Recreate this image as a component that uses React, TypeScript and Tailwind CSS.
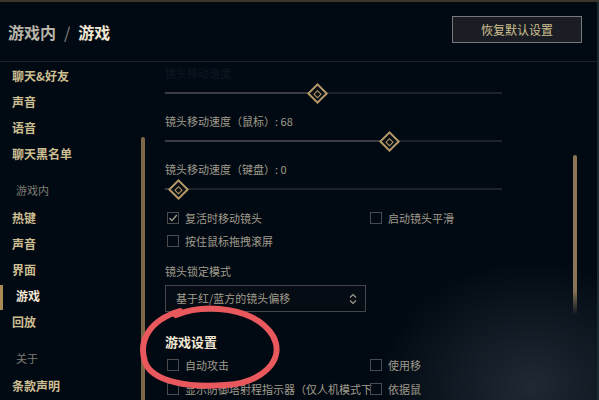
import React from 'react';

const font = { fontFamily: '"Noto Sans CJK SC", "Noto Sans", sans-serif' };

const Slider = ({ value }: { value: number }) => {
    // thumb center runs from 13px to 324px across the 337px track
    const left = 13 + (value / 100) * 311;
    return (
        <div className="h-[20px] flex items-center">
            <div className="relative w-[337px] h-[2px] bg-[#1e2328]">
                <div className="absolute left-0 top-0 h-[2px] bg-[#3c3c41]" style={{ width: left }} />
                <div
                    className="absolute top-[1px] w-[22px] h-[22px] -translate-x-1/2 -translate-y-1/2 flex items-center justify-center"
                    style={{ left }}
                >
                    <div className="w-[15px] h-[15px] rotate-45 border-2 border-[#b4996a] bg-[#0a0f14] flex items-center justify-center">
                        <div className="w-[6px] h-[6px] border-[1.5px] border-[#b4996a]" />
                    </div>
                </div>
            </div>
        </div>
    );
};

const Check = ({ label, checked = false }: { label: string; checked?: boolean }) => (
    <div className="flex items-center gap-[6px]">
        <div className="w-[12px] h-[12px] border border-[#4b4b4e] flex items-center justify-center shrink-0">
            {checked && (
                <svg width="10" height="10" viewBox="0 0 10 10">
                    <path d="M1.5 5.2 L4 7.6 L8.8 2" stroke="#a09b8c" strokeWidth="1.4" fill="none" />
                </svg>
            )}
        </div>
        <span className="text-[11px] text-[#a09b8c] whitespace-nowrap">{label}</span>
    </div>
);

const SideItem = ({ label, active = false }: { label: string; active?: boolean }) => (
    <div className="relative h-[26px] flex items-center">
        {active && <div className="absolute left-0 top-[2px] w-[3px] h-[25px] bg-[#a88a55]" />}
        <span
            className={
                active
                    ? 'pl-[16px] text-[12px] font-bold text-[#f0e6d2]'
                    : 'pl-[12px] text-[12px] font-bold text-[#cdbe91]'
            }
        >
            {label}
        </span>
    </div>
);

const SideHeader = ({ label }: { label: string }) => (
    <div className="h-[26px] mt-[10px] flex items-center pl-[16px] text-[11px] text-[#7e7c74]">{label}</div>
);

export default function App() {
    return (
        <div className="relative w-[599px] h-[400px] overflow-hidden bg-[#010a13] border-t-2 border-[#3a362c]" style={font}>
            <div className="flex flex-col h-full border-r-2 border-[#1a2a2e]">
                {/* Header */}
                <header className="h-[60px] flex items-center justify-between pl-[8px] pr-[15px] border-b border-[#1e2328] shrink-0">
                    <div className="text-[16px] font-bold flex items-center gap-[8px]">
                        <span className="text-[#b8b4a8]">游戏内</span>
                        <span className="text-[#8a877e] font-normal">/</span>
                        <span className="text-[#f0e6d2]">游戏</span>
                    </div>
                    <button className="w-[130px] h-[27px] mb-[4px] border border-[#78787a] bg-[#1a1e24] text-[12px] text-[#cdbe91]">
                        恢复默认设置
                    </button>
                </header>

                <div className="flex flex-1 min-h-0">
                    {/* Sidebar */}
                    <aside className="relative w-[146px] shrink-0 pt-[1px]">
                        <SideItem label="聊天&好友" />
                        <SideItem label="声音" />
                        <SideItem label="语音" />
                        <SideItem label="聊天黑名单" />
                        <SideHeader label="游戏内" />
                        <div className="mt-[2px]">
                            <SideItem label="热键" />
                            <SideItem label="声音" />
                            <SideItem label="界面" />
                            <SideItem label="游戏" active />
                            <SideItem label="回放" />
                        </div>
                        <SideHeader label="关于" />
                        <div className="mt-[2px]">
                            <SideItem label="条款声明" />
                        </div>
                        <div className="absolute right-[1px] top-[75px] bottom-0 w-[4px] rounded-t-sm bg-[#7e6848]" />
                    </aside>

                    {/* Content */}
                    <main className="relative flex-1 pl-[19px] pt-[1px]">
                        <div className="h-[20px] flex items-center text-[11px] text-[#0e1822]">镜头移动速度</div>
                        <Slider value={45} />
                        <div className="h-[20px] mt-[8px] flex items-center text-[11px] text-[#a09b8c]">镜头移动速度（鼠标）: 68</div>
                        <Slider value={68} />
                        <div className="h-[20px] mt-[8px] flex items-center text-[11px] text-[#a09b8c]">镜头移动速度（键盘）: 0</div>
                        <Slider value={0} />

                        <div className="h-[22px] mt-[8px] pl-[2px] grid grid-cols-[203px_1fr] items-center">
                            <Check label="复活时移动镜头" checked />
                            <Check label="启动镜头平滑" />
                        </div>
                        <div className="h-[22px] mt-[1px] pl-[2px] flex items-center">
                            <Check label="按住鼠标拖拽滚屏" />
                        </div>

                        <div className="h-[20px] mt-[9px] flex items-center text-[11px] text-[#a09b8c]">镜头锁定模式</div>
                        <div className="mt-[4px] w-[201px] h-[27px] border border-[#46464a] bg-[#050c14] flex items-center justify-between pl-[10px] pr-[8px]">
                            <span className="text-[11px] text-[#a09b8c]">基于红/蓝方的镜头偏移</span>
                            <svg width="8" height="12" viewBox="0 0 8 12">
                                <path d="M1 4.5 L4 1.5 L7 4.5 M1 7.5 L4 10.5 L7 7.5" stroke="#a09b8c" strokeWidth="1.2" fill="none" />
                            </svg>
                        </div>

                        <div className="h-[20px] mt-[20px] flex items-center text-[13px] font-bold text-[#f0e6d2]">游戏设置</div>
                        <div className="h-[22px] mt-[2px] pl-[2px] grid grid-cols-[203px_1fr] items-center">
                            <Check label="自动攻击" />
                            <Check label="使用移" />
                        </div>
                        <div className="h-[22px] mt-[2px] pl-[2px] grid grid-cols-[203px_1fr] items-center">
                            <Check label="显示防御塔射程指示器（仅人机模式下" />
                            <Check label="依据鼠" />
                        </div>

                        {/* content scrollbar */}
                        <div className="absolute right-[20px] top-[93px] w-[4px] h-[160px] rounded-t-sm bg-gradient-to-b from-[#8c7456] from-85% to-transparent" />
                        {/* haze from the photo */}
                        <div className="absolute right-0 bottom-0 w-[220px] h-[140px] bg-[radial-gradient(ellipse_at_70%_90%,rgba(90,100,110,0.35),transparent_70%)]" />
                    </main>
                </div>
            </div>

            {/* red hand-drawn circle */}
            <svg className="absolute inset-0 pointer-events-none" width="599" height="400" viewBox="0 0 599 400">
                <path
                    d="M176 313 C205 301 255 305 273 334 C286 358 262 381 225 383 C190 386 152 380 145 360 C138 338 150 318 180 309"
                    stroke="#e8585c"
                    strokeWidth="6"
                    strokeLinecap="round"
                    fill="none"
                />
            </svg>
        </div>
    );
}
